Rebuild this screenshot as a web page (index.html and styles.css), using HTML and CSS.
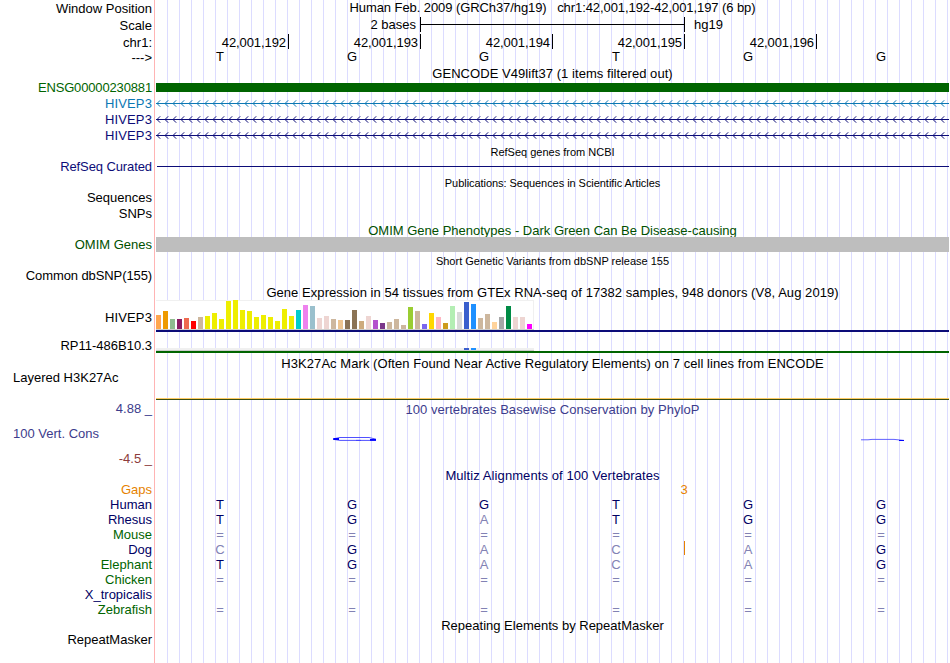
FILE: index.html
```html
<!DOCTYPE html>
<html lang="en">
<head>
    <meta charset="UTF-8">
    <meta name="viewport" content="width=device-width, initial-scale=1.0">
    <title>Human chr1:42,001,192-42,001,197 - Genome Browser hg19</title>
    <link rel="stylesheet" href="styles.css">
</head>
<body>
    <!-- shared arrow patterns for the minus strand introns -->
    <svg class="defs" width="0" height="0">
        <defs>
            <pattern id="arrowsBlue" width="8" height="7" patternUnits="userSpaceOnUse">
                <path d="M4.2 0.3 L1 3.5 L4.2 6.7" fill="none" stroke="#0c78b4" stroke-width="1"/>
            </pattern>
            <pattern id="arrowsNavy" width="8" height="7" patternUnits="userSpaceOnUse">
                <path d="M4.2 0.3 L1 3.5 L4.2 6.7" fill="none" stroke="#0c0c78" stroke-width="1"/>
            </pattern>
        </defs>
    </svg>

    <div class="browser">
        <div class="row ruler-top">
            <div class="label">Window Position</div>
            <div class="title t-pos">Human Feb. 2009 (GRCh37/hg19) &nbsp; chr1:42,001,192-42,001,197 (6 bp)</div>
        </div>
        <div class="row scale">
            <div class="label">Scale</div>
            <div class="scale-track">
                <span class="scale-text">2 bases</span>
                <div class="scale-bar"><div class="scale-line"></div></div>
                <span class="scale-db">hg19</span>
            </div>
        </div>
        <div class="row coords">
            <div class="label">chr1:</div>
            <div class="ticks">
                <span>42,001,192</span>
                <span>42,001,193</span>
                <span>42,001,194</span>
                <span>42,001,195</span>
                <span>42,001,196</span>
            </div>
        </div>
        <div class="row strand">
            <div class="label">---&gt;</div>
            <div class="bases" data-seq="TGGTGG"></div>
        </div>

        <!-- GENCODE -->
        <div class="row gencode-title">
            <div></div>
            <div class="title t-gencode">GENCODE V49lift37 (1 items filtered out)</div>
        </div>
        <div class="row h15">
            <div class="label green t-ensg">ENSG00000230881</div>
            <div class="bar-green"></div>
        </div>
        <div class="row gene">
            <div class="label blue t-gene">HIVEP3</div>
            <svg class="intron" width="793" height="7"><rect width="793" height="7" fill="url(#arrowsBlue)"/><rect y="3" width="793" height="1" fill="#0c78b4"/></svg>
        </div>
        <div class="row gene">
            <div class="label navy t-gene">HIVEP3</div>
            <svg class="intron" width="793" height="7"><rect width="793" height="7" fill="url(#arrowsNavy)"/><rect y="3" width="793" height="1" fill="#0c0c78"/></svg>
        </div>
        <div class="row gene">
            <div class="label navy t-gene">HIVEP3</div>
            <svg class="intron" width="793" height="7"><rect width="793" height="7" fill="url(#arrowsNavy)"/><rect y="3" width="793" height="1" fill="#0c0c78"/></svg>
        </div>

        <!-- RefSeq -->
        <div class="row refseq-title">
            <div></div>
            <div class="title small">RefSeq genes from NCBI</div>
        </div>
        <div class="row gene">
            <div class="label navy tight">RefSeq Curated</div>
            <div class="thin-line"></div>
        </div>

        <!-- Publications -->
        <div class="row pubs-title">
            <div></div>
            <div class="title small t-pubs">Publications: Sequences in Scientific Articles</div>
        </div>
        <div class="row h15"><div class="label">Sequences</div></div>
        <div class="row h16"><div class="label">SNPs</div></div>

        <!-- OMIM -->
        <div class="row omim-title">
            <div></div>
            <div class="title dark-green">OMIM Gene Phenotypes - Dark Green Can Be Disease-causing</div>
        </div>
        <div class="row h15">
            <div class="label dark-green">OMIM Genes</div>
            <div class="bar-gray"></div>
        </div>

        <!-- dbSNP -->
        <div class="row snp-title">
            <div></div>
            <div class="title small">Short Genetic Variants from dbSNP release 155</div>
        </div>
        <div class="row h15"><div class="label tight">Common dbSNP(155)</div></div>

        <!-- GTEx -->
        <div class="row gtex-title">
            <div></div>
            <div class="title t-gtex">Gene Expression in 54 tissues from GTEx RNA-seq of 17382 samples, 948 donors (V8, Aug 2019)</div>
        </div>
        <div class="row gtex">
            <div class="label t-gene">HIVEP3</div>
            <div class="gtex-track">
                <div class="gtex-chart" id="gtexHivep3"></div>
                <div class="gtex-line navy-line"></div>
            </div>
        </div>
        <div class="row gtex-low">
            <div class="label">RP11-486B10.3</div>
            <div class="gtex-track">
                <div class="gtex-chart flat" id="gtexRp11"></div>
                <div class="gtex-line green-line"></div>
            </div>
        </div>

        <!-- H3K27Ac -->
        <div class="row h3k-title">
            <div></div>
            <div class="title t-h3k">H3K27Ac Mark (Often Found Near Active Regulatory Elements) on 7 cell lines from ENCODE</div>
        </div>
        <div class="row h3k">
            <div class="label left">Layered H3K27Ac</div>
            <div class="h3k-line"></div>
        </div>

        <!-- Conservation -->
        <div class="row cons-title">
            <div class="label cons-blue">4.88 _</div>
            <div class="title cons-blue t-cons">100 vertebrates Basewise Conservation by PhyloP</div>
        </div>
        <div class="row cons">
            <div class="cons-labels">
                <div class="label left cons-blue">100 Vert. Cons</div>
                <div class="label cons-red">-4.5 _</div>
            </div>
            <svg class="wiggle" width="793" height="50">
                <path d="M177 21.9 L184 20.5 H213 L220 22.2 M220 23.4 H200 M205 23.4 H184 L177 22.3" fill="none" stroke="#3c3cff" stroke-width="0.9"/>
                <path d="M177.5 22 H183 M214 22.8 H220" stroke="#0000ff" stroke-width="1.8"/>
                <path d="M705 22.8 H712 L716 22.4 H738 L748 23.4" fill="none" stroke="#5050ff" stroke-width="0.9"/>
                <path d="M743 23.5 H748" stroke="#0000ff"/>
            </svg>
        </div>

        <!-- Multiz -->
        <div class="row multiz-title">
            <div></div>
            <div class="title deep-navy t-multiz">Multiz Alignments of 100 Vertebrates</div>
        </div>
        <div class="row h15">
            <div class="label orange">Gaps</div>
            <div class="gap-count">3</div>
        </div>
        <div class="row h15">
            <div class="label deep-navy">Human</div>
            <div class="bases align" data-seq="TGGTGG"></div>
        </div>
        <div class="row h15">
            <div class="label deep-navy">Rhesus</div>
            <div class="bases align" data-seq="TGaTGG"></div>
        </div>
        <div class="row h15">
            <div class="label species-green">Mouse</div>
            <div class="bases align" data-seq="======"></div>
        </div>
        <div class="row h15">
            <div class="label deep-navy">Dog</div>
            <div class="bases align insert" data-seq="cGacaG"></div>
        </div>
        <div class="row h15">
            <div class="label species-green">Elephant</div>
            <div class="bases align" data-seq="TGacaG"></div>
        </div>
        <div class="row h15">
            <div class="label species-green">Chicken</div>
            <div class="bases align" data-seq="======"></div>
        </div>
        <div class="row h15"><div class="label deep-navy">X_tropicalis</div></div>
        <div class="row h15">
            <div class="label species-green">Zebrafish</div>
            <div class="bases align" data-seq="======"></div>
        </div>

        <!-- RepeatMasker -->
        <div class="row rmsk-title">
            <div></div>
            <div class="title">Repeating Elements by RepeatMasker</div>
        </div>
        <div class="row h15"><div class="label">RepeatMasker</div></div>
    </div>

    <script>
        // [color, height] per GTEx tissue
        const tissues = [
            ['#ffa54f', 14], ['#ee9a00', 18], ['#8fbc8f', 10], ['#8b1c62', 10], ['#ee6a50', 11], ['#ff0000', 8],
            ['#cdb79e', 12], ['#eeee00', 13], ['#eeee00', 16], ['#eeee00', 10], ['#eeee00', 28], ['#eeee00', 29],
            ['#eeee00', 19], ['#eeee00', 18], ['#eeee00', 12], ['#eeee00', 14], ['#eeee00', 12], ['#eeee00', 8],
            ['#eeee00', 20], ['#eeee00', 13], ['#00cdcd', 19], ['#ee82ee', 24], ['#9ac0cd', 23], ['#eed5d2', 11],
            ['#eed5d2', 13], ['#cdb79e', 10], ['#eec591', 9], ['#8b7355', 9], ['#8b7355', 19], ['#cdaa7d', 8],
            ['#eed5d2', 13], ['#b452cd', 9], ['#7a378b', 6], ['#cdb79e', 7], ['#cdb79e', 10], ['#cdb79e', 4],
            ['#9acd32', 22], ['#cdb79e', 18], ['#7a67ee', 5], ['#ffd700', 16], ['#ffb6c1', 12], ['#cd9b1d', 6],
            ['#b4eeb4', 23], ['#d9d9d9', 17], ['#3a5fcd', 27], ['#1e90ff', 25], ['#cdb79e', 11], ['#cdb79e', 15],
            ['#ffd39b', 7], ['#a6a6a6', 12], ['#008b45', 23], ['#eed5d2', 12], ['#eed5d2', 12], ['#ff00ff', 5]
        ];

        function drawChart(id, heightOf) {
            const chart = document.getElementById(id);
            tissues.forEach(function(tissue, i) {
                const bar = document.createElement('div');
                bar.className = 'tissue';
                bar.style.height = heightOf(tissue, i) + 'px';
                bar.style.backgroundColor = tissue[0];
                chart.appendChild(bar);
            });
        }

        drawChart('gtexHivep3', function(tissue) { return tissue[1]; });
        drawChart('gtexRp11', function(tissue, i) { return i === 44 || i === 45 ? 2 : 0; });

        // lower case = differs from the reference base, drawn faded
        document.querySelectorAll('.bases').forEach(function(row) {
            row.dataset.seq.split('').forEach(function(base) {
                const cell = document.createElement('span');
                cell.textContent = base.toUpperCase();
                if (base === '=') {
                    cell.className = 'faded gap';
                } else if (base !== base.toUpperCase()) {
                    cell.className = 'faded';
                }
                row.appendChild(cell);
            });
        });
    </script>
</body>
</html>
```
FILE: styles.css
```css
body {
    margin: 0;
    background-color: #ffffff;
    font-family: "Liberation Sans", Arial, Helvetica, sans-serif;
    font-size: 13px;
    color: #000000;
}

.defs {
    display: block;
}

.browser {
    width: 949px;
    height: 663px;
    overflow: hidden;
    /* pink label divider, then a guide line every 12px */
    background-image:
        linear-gradient(#ffb4b4, #ffb4b4),
        linear-gradient(#ffffff, #ffffff),
        repeating-linear-gradient(to right, transparent 0 11px, #dcdcff 11px 12px);
    background-size: 1px 100%, 156px 100%, 100% 100%;
    background-position: 154px 0, 0 0, 156px 0;
    background-repeat: no-repeat;
}

.row {
    display: grid;
    grid-template-columns: 152px 793px;
    grid-template-rows: 100%;
    column-gap: 4px;
    height: 15px;
    line-height: 15px;
    white-space: nowrap;
}

.label {
    text-align: right;
}

.label.left {
    text-align: left;
    padding-left: 13px;
}

.title {
    text-align: center;
}

.title.small {
    font-size: 11px;
}

.tight { letter-spacing: -0.1px; }

.h15 { height: 15px; line-height: 15px; }
.h16 { height: 16px; line-height: 18px; }

.green { color: #006400; }
.dark-green { color: #005000; }
.species-green { color: #006400; }
.blue { color: #0c78b4; }
.navy { color: #0c0c78; }
.deep-navy { color: #000064; }
.orange { color: #e68200; }
.cons-blue { color: #3c3c8c; }
.cons-red { color: #8c3c3c; }

/* ruler */
.ruler-top { height: 17px; line-height: 18px; }
.ruler-top .title { line-height: 15px; }

.scale { height: 17px; line-height: 17px; }

.scale-track {
    display: flex;
    line-height: 15px;
}

.scale-text {
    width: 260px;
    margin-right: 4px;
    text-align: right;
}

.scale-bar {
    width: 263px;
    height: 15px;
    border-left: 1px solid #000000;
    border-right: 1px solid #000000;
}

.scale-line {
    height: 1px;
    margin-top: 7px;
    background-color: #000000;
}

.scale-db {
    margin-left: 9px;
}

.coords { height: 16px; line-height: 17px; }

.ticks {
    display: flex;
    letter-spacing: -0.08px;
}

.ticks span {
    box-sizing: border-box;
    width: 132px;
    height: 15px;
    padding-right: 2px;
    border-right: 1px solid #000000;
    text-align: right;
}

.ticks span:first-child {
    width: 133px;
}

.strand { height: 15px; line-height: 15px; }
.strand .bases { line-height: 13px; }

.bases {
    display: grid;
    grid-template-columns: repeat(5, 132px) 134px;
    margin-left: -2px;
    text-align: center;
}

.align {
    color: #000064;
}

.faded {
    color: #8282b4;
}

.gap {
    line-height: 16px;
}

/* genes */
.gene { height: 16px; line-height: 16px; align-items: center; }

.gene .label {
    margin-top: 2px;
}

.intron {
    display: block;
    margin-top: 1px;
}

.bar-green {
    height: 9px;
    margin-top: 3px;
    background-color: #006400;
}

.bar-gray {
    height: 15px;
    background-color: #bebebe;
    z-index: 1;
}

.thin-line {
    height: 1px;
    margin: 1px 0 0 1px;
    background-color: #0c0c78;
}

/* track titles */
.gencode-title { height: 15px; line-height: 17px; }
.refseq-title { height: 15px; line-height: 19px; }
.pubs-title { height: 16px; line-height: 18px; }
.omim-title { height: 16px; line-height: 19px; }
.snp-title { height: 16px; line-height: 18px; }
.gtex-title { height: 17px; line-height: 19px; }
.h3k-title { height: 18px; line-height: 22px; }
.cons-title { height: 17px; line-height: 18px; }
.cons-title .title { line-height: 20px; }
.multiz-title { height: 15px; line-height: 17px; }
.rmsk-title { height: 15px; line-height: 17px; }

.t-ensg { letter-spacing: -0.15px; }
.t-gene { letter-spacing: 0.12px; }
.t-pos { letter-spacing: -0.08px; }
.t-gencode { letter-spacing: 0.05px; }
.t-pubs { letter-spacing: -0.05px; }
.t-gtex { letter-spacing: 0.055px; }
.t-h3k { letter-spacing: 0.055px; }
.t-cons { letter-spacing: 0.04px; }
.t-multiz { letter-spacing: 0.09px; }

/* expression */
.gtex { height: 32px; line-height: 36px; }
.gtex-low { height: 21px; line-height: 28px; }

.gtex-track {
    display: flex;
    flex-direction: column;
    justify-content: flex-end;
}

.gtex-chart {
    box-sizing: border-box;
    display: flex;
    align-items: flex-end;
    gap: 2px;
    width: 378px;
    height: 30px;
    border-bottom: 1px solid #cdcdcd;
    background-color: #ffffff;
    box-shadow: inset 0 1px #f0f0f0, inset -1px 0 #f0f0f0;
}

.gtex-chart.flat {
    height: 3px;
    background-color: #f0f0f0;
}

.tissue {
    width: 5px;
}

.gtex-line {
    height: 2px;
}

.navy-line { background-color: #0c0c78; }
.green-line { background-color: #006400; }

/* histone marks */
.h3k { height: 29px; line-height: 13px; }

.h3k-line {
    align-self: end;
    height: 1px;
    border-top: 1px solid #ffcc66;
    background-color: #3c5014;
}

/* conservation */
.cons { height: 50px; line-height: 16px; }

.cons-labels {
    display: flex;
    flex-direction: column;
    justify-content: space-between;
    height: 41px;
    padding-top: 9px;
}

.wiggle {
    display: block;
}

.gap-count {
    width: 10px;
    margin-left: 523px;
    color: #e68200;
    text-align: center;
}

/* inserted sequence marker between bases 4 and 5 */
.insert {
    margin-top: -1px;
    padding-top: 1px;
    background: linear-gradient(#e68200, #e68200) 530px 0 / 1px 14px no-repeat;
}
```
